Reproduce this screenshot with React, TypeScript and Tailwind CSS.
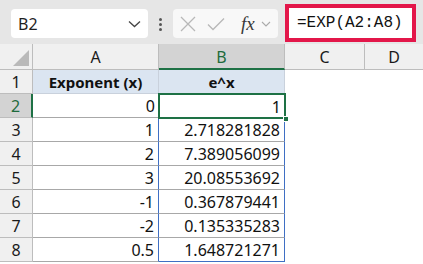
import React from "react";

const FONT = { fontFamily: '"Noto Sans", "Open Sans", sans-serif' };

const aVals = ["0", "1", "2", "3", "-1", "-2", "0.5"];
const bVals = [
  "1",
  "2.718281828",
  "7.389056099",
  "20.08553692",
  "0.367879441",
  "0.135335283",
  "1.648721271",
];

function TopBar() {
  return (
    <div className="h-[44px] bg-[#e6e6e6] flex items-start relative">
      {/* Name box */}
      <div className="mt-[9px] ml-[11px] w-[137px] h-[29px] bg-white rounded-[4px] flex items-center justify-between pl-[7px] pr-[7px]">
        <span className="text-[16px] text-[#1f1f1f] leading-none">B2</span>
        <svg width="13" height="8" viewBox="0 0 13 8">
          <path d="M1 1.5 L6.5 6.5 L12 1.5" fill="none" stroke="#444" strokeWidth="1.3" />
        </svg>
      </div>
      {/* dots */}
      <div className="mt-[18px] ml-[11px] flex flex-col gap-[2px]">
        <div className="w-[3px] h-[3px] bg-[#555] rounded-full" />
        <div className="w-[3px] h-[3px] bg-[#555] rounded-full" />
        <div className="w-[3px] h-[3px] bg-[#555] rounded-full" />
      </div>
      {/* formula buttons */}
      <div className="mt-[9px] ml-[11px] w-[105px] h-[29px] bg-[#f8f8f8] rounded-[4px] flex items-center pl-[7px]">
        <svg width="16" height="16" viewBox="0 0 16 16">
          <path d="M1 1 L15 15 M15 1 L1 15" stroke="#b8b8b8" strokeWidth="1.3" fill="none" />
        </svg>
        <svg width="18" height="14" viewBox="0 0 18 14" className="ml-[11px]">
          <path d="M1 7.5 L6 12.5 L17 1.5" stroke="#b8b8b8" strokeWidth="1.3" fill="none" />
        </svg>
        <span
          className="ml-[16px] text-[19px] italic text-[#3a3a3a] leading-none"
          style={{ fontFamily: '"Liberation Serif", "DejaVu Serif", serif' }}
        >
          fx
        </span>
        <svg width="10" height="6" viewBox="0 0 10 6" className="ml-[6px]">
          <path d="M1 1 L5 5 L9 1" fill="none" stroke="#aaa" strokeWidth="1.1" />
        </svg>
      </div>
      {/* formula box with red highlight */}
      <div className="mt-[4px] ml-[7px] w-[131px] h-[38px] bg-white border-[4px] border-[#e3174a] flex items-center pl-[8px]">
        <span
          className="text-[16px] text-[#111] leading-none"
          style={{ fontFamily: '"Liberation Mono", "DejaVu Sans Mono", monospace' }}
        >
          =EXP(A2:A8)
        </span>
      </div>
    </div>
  );
}

function ColHeader({ label, selected, last }: { label: string; selected?: boolean; last?: boolean }) {
  return (
    <div
      className={
        selected
          ? "bg-[#d3d3d3] text-[#1e6b3c] border-r border-[#bdbdbd] border-b-2 border-b-[#1e7145] flex items-end justify-center pb-[1px] leading-[20px] text-[16px]"
          : last
          ? "bg-[#f0f0f0] text-[#1a1a1a] border-b border-[#bdbdbd] flex items-end justify-center pb-[2px] leading-[20px] text-[16px]"
          : "bg-[#f0f0f0] text-[#1a1a1a] border-r border-b border-[#bdbdbd] flex items-end justify-center pb-[2px] leading-[20px] text-[16px]"
      }
    >
      {label}
    </div>
  );
}

function RowHeader({ n, selected }: { n: number; selected?: boolean }) {
  return (
    <div
      className={
        selected
          ? "bg-[#d3d3d3] text-[#1e6b3c] border-b border-[#bdbdbd] border-r-2 border-r-[#1e7145] flex items-end justify-center pb-[1px] leading-[20px] text-[16px]"
          : "bg-[#f0f0f0] text-[#1a1a1a] border-b border-r border-[#bdbdbd] flex items-end justify-center pb-[1px] leading-[20px] text-[16px]"
      }
    >
      {n}
    </div>
  );
}

export default function App() {
  return (
    <div className="w-[423px] h-[264px] overflow-hidden bg-white" style={FONT}>
      <TopBar />
      <div className="grid grid-cols-[33px_126px_126px_80px_58px] grid-rows-[26px_repeat(8,24px)]">
        {/* header row */}
        <div className="bg-[#f0f0f0] border-r border-b border-[#bdbdbd] flex items-end justify-end pr-[3px] pb-[3px]">
          <svg width="16" height="16" viewBox="0 0 16 16">
            <path d="M16 0 L16 16 L0 16 Z" fill="#b9b9b9" />
          </svg>
        </div>
        <ColHeader label="A" />
        <ColHeader label="B" selected />
        <ColHeader label="C" />
        <ColHeader label="D" last />

        {/* row 1 */}
        <RowHeader n={1} />
        <div className="bg-[#dbe5f1] border-r border-b border-[#c9d1dc] flex items-end justify-center pb-[1px] leading-[20px] text-[15px] font-bold text-[#111]">
          Exponent (x)
        </div>
        <div className="bg-[#dbe5f1] border-r border-b border-[#c9d1dc] flex items-end justify-center pb-[1px] leading-[20px] text-[15px] font-bold text-[#111]">
          e^x
        </div>
        <div className="bg-white" />
        <div className="bg-white" />

        {/* data rows */}
        {aVals.map((a, i) => {
          const row = i + 2;
          const isFirst = i === 0;
          const isLast = i === aVals.length - 1;
          return (
            <React.Fragment key={row}>
              <RowHeader n={row} selected={isFirst} />
              <div
                className={
                  isFirst
                    ? "bg-white border-b border-[#a8a8a8] flex items-end justify-end pr-[4px] pb-[1px] leading-[20px] text-[16px] text-[#111]"
                    : "bg-white border-b border-r border-[#a8a8a8] border-r-[#3f6fc4] flex items-end justify-end pr-[4px] pb-[1px] leading-[20px] text-[16px] text-[#111]"
                }
              >
                {a}
              </div>
              <div
                className={
                  isFirst
                    ? "relative bg-white flex items-end justify-end pr-[4px] pb-[1px] leading-[20px] text-[16px] text-[#111]"
                    : isLast
                    ? "bg-white border-r border-b border-[#3f6fc4] flex items-end justify-end pr-[4px] pb-[1px] leading-[20px] text-[16px] text-[#111]"
                    : "bg-white border-r border-b border-[#a8a8a8] border-r-[#3f6fc4] flex items-end justify-end pr-[4px] pb-[1px] leading-[20px] text-[16px] text-[#111]"
                }
              >
                {isFirst && (
                  <>
                    <div className="absolute left-[-1px] top-[-1px] right-[-1px] bottom-[-1px] border-2 border-[#1e7145] pointer-events-none" />
                    <div className="absolute right-[-4px] bottom-[-4px] w-[6px] h-[6px] bg-[#1e7145] border border-white" />
                  </>
                )}
                <span className="relative">{bVals[i]}</span>
              </div>
              <div className="bg-white" />
              <div className="bg-white" />
            </React.Fragment>
          );
        })}
      </div>
    </div>
  );
}
